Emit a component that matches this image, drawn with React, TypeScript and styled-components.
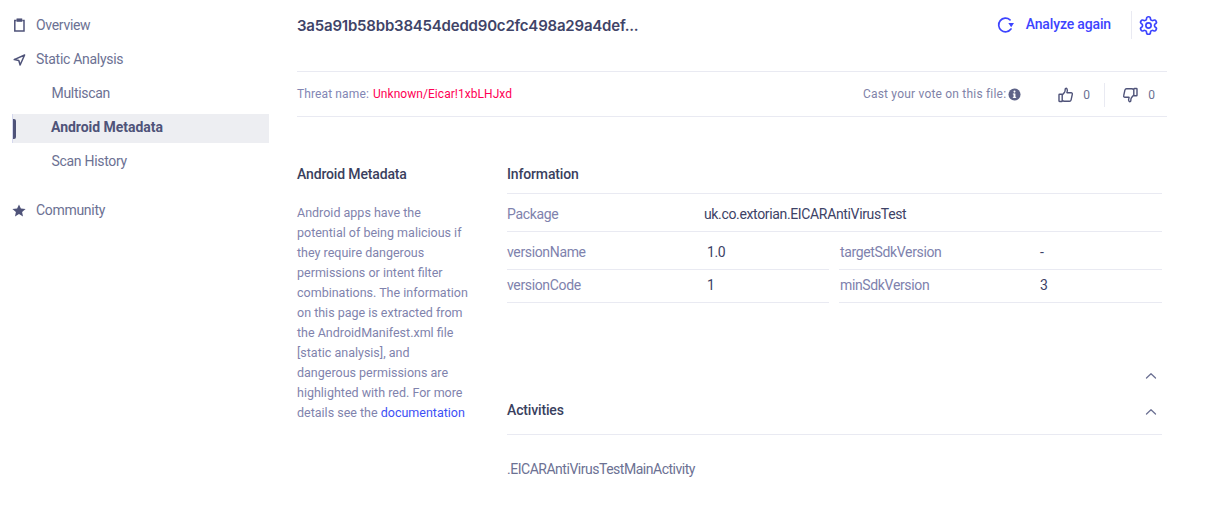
import React from "react";
import styled, { createGlobalStyle } from "styled-components";

const Global = createGlobalStyle`
  html, body { margin: 0; padding: 0; background: #fff; }
  body { font-family: Roboto, "Liberation Sans", sans-serif; color: #3d4266; }
  * { box-sizing: border-box; }
`;

const Page = styled.div`
  width: 1215px;
  height: 509px;
  display: flex;
  overflow: hidden;
  background: #fff;
`;

const Sidebar = styled.nav`
  width: 257px;
  margin-left: 12px;
  padding-top: 8px;
  flex: none;
  display: flex;
  flex-direction: column;
`;

const NavRow = styled.div<{ $top?: number }>`
  height: 34px;
  display: flex;
  align-items: center;
  font-size: 14px;
  letter-spacing: -0.3px;
  color: #6c7193;
  margin-top: ${(p) => p.$top ?? 0}px;
  svg { width: 14px; height: 14px; margin-right: 10px; flex: none; color: #4f5379; }
`;

const SubRow = styled.div<{ $active?: boolean }>`
  height: ${(p) => (p.$active ? 29 : 34)}px;
  margin: ${(p) => (p.$active ? "4px 0 1px" : "0")};
  padding-left: ${(p) => (p.$active ? 38 : 39.5)}px;
  padding-bottom: ${(p) => (p.$active ? 4 : 0)}px;
  display: flex;
  align-items: center;
  font-size: 14px;
  letter-spacing: ${(p) => (p.$active ? "-0.03px" : "-0.3px")};
  position: relative;
  color: ${(p) => (p.$active ? "#4f5379" : "#6c7193")};
  font-weight: ${(p) => (p.$active ? 700 : 400)};
  background: ${(p) => (p.$active ? "#edeef2" : "transparent")};
  border-left: ${(p) => (p.$active ? "1px solid #d5d8ee" : "0 solid transparent")};
`;

const ActiveBar = styled.span`
  position: absolute;
  left: 0;
  top: 5px;
  width: 3px;
  height: 20px;
  border-radius: 0 2px 2px 0;
  background: #4f5379;
`;

const Main = styled.main`
  margin-left: 28px;
  width: 870px;
  flex: none;
  display: flex;
  flex-direction: column;
`;

const Header = styled.header`
  height: 72px;
  border-bottom: 1px solid #e9eaf2;
  display: flex;
  align-items: flex-start;
  justify-content: space-between;
  padding-top: 11px;
`;

const Title = styled.h1`
  margin: 4px 0 0;
  font-family: Inter, Roboto, sans-serif;
  font-size: 15px;
  line-height: 22px;
  font-weight: 600;
  letter-spacing: -0.2px;
  color: #3f4468;
`;

const Actions = styled.div`
  display: flex;
  align-items: center;
  height: 28px;
  margin-right: 8px;
`;

const AnalyzeButton = styled.div`
  display: flex;
  align-items: center;
  gap: 11px;
  font-size: 14px;
  font-weight: 500;
  letter-spacing: -0.15px;
  line-height: 26px;
  padding-bottom: 2px;
  color: #3d44ff;
  padding-right: 20px;
  height: 28px;
  border-right: 1px solid #e9eaf2;
  svg { width: 18px; height: 18px; margin-top: 2px; }
`;

const Gear = styled.div`
  width: 21px;
  height: 21px;
  margin-left: 6px;
  color: #3d44ff;
  svg { width: 21px; height: 21px; display: block; }
`;

const ThreatRow = styled.div`
  height: 45px;
  border-bottom: 1px solid #e9eaf2;
  display: flex;
  align-items: center;
  justify-content: space-between;
  font-size: 12px;
  letter-spacing: 0.12px;
`;

const Threat = styled.div`
  color: #8286b4;
  span { color: #ff0055; letter-spacing: 0.05px; margin-left: 1px; }
`;

const Vote = styled.div`
  display: flex;
  align-items: center;
  color: #7f83a8;
`;

const VoteLabel = styled.div`
  display: flex;
  align-items: center;
  gap: 2px;
  margin-right: 37px;
  letter-spacing: 0.2px;
  svg { width: 13px; height: 13px; color: #5d6287; }
`;

const VoteButton = styled.div<{ $divider?: boolean }>`
  display: flex;
  align-items: center;
  gap: ${(p) => (p.$divider ? 9 : 10)}px;
  height: 24px;
  margin-top: 1px;
  color: #6c7193;
  line-height: 30px;
  ${(p) => (p.$divider ? "border-right: 1px solid #e9eaf2; padding-right: 14px; margin-right: 17px;" : "padding-right: 12px;")}
  svg { width: 16px; height: 16px; margin-top: 1px; color: #4f5379; }
`;

const Body = styled.div`
  display: flex;
  padding-top: 47px;
`;

const Aside = styled.aside`
  width: 170px;
  flex: none;
  margin-right: 40px;
`;

const SectionHead = styled.h2`
  margin: 0;
  height: 20px;
  line-height: 20px;
  font-size: 14px;
  font-weight: 500;
  letter-spacing: -0.15px;
  color: #3a3f5e;
`;

const Description = styled.p`
  margin: 19px 0 0;
  font-size: 12.5px;
  line-height: 20px;
  color: #7f83ad;
  white-space: nowrap;
  a { color: #3d50f5; text-decoration: none; }
`;

const Content = styled.section`
  width: 655px;
  flex: none;
  display: flex;
  flex-direction: column;
`;

const InfoHead = styled.div`
  height: 30px;
  border-bottom: 1px solid #e9eaf2;
`;

const FullRow = styled.div`
  height: 38px;
  padding-top: 2px;
  display: flex;
  align-items: center;
  border-bottom: 1px solid #e9eaf2;
`;

const Key = styled.div<{ $w: number }>`
  width: ${(p) => p.$w}px;
  flex: none;
  font-size: 14px;
  letter-spacing: -0.35px;
  color: #7e82ad;
`;

const Val = styled.div`
  font-size: 14px;
  letter-spacing: -0.35px;
  color: #3d4266;
`;

const Grid = styled.div`
  display: grid;
  grid-template-columns: 322px 323px;
  column-gap: 10px;
`;

const Cell = styled.div<{ $h: number; $right?: boolean; $pt?: number; $pb?: number }>`
  height: ${(p) => p.$h}px;
  display: flex;
  align-items: center;
  padding: ${(p) => p.$pt ?? 0}px 0 ${(p) => p.$pb ?? 0}px ${(p) => (p.$right ? 1 : 0)}px;
  border-bottom: 1px solid #e9eaf2;
`;

const ChevronRow = styled.div<{ $top?: number }>`
  display: flex;
  justify-content: flex-end;
  padding-right: 5px;
  margin-top: ${(p) => p.$top ?? 0}px;
  color: #6c7193;
  svg { width: 12px; height: 12px; display: block; }
`;

const ActivitiesHead = styled.div`
  margin-top: 18px;
  height: 35px;
  border-bottom: 1px solid #e9eaf2;
  display: flex;
  align-items: flex-start;
  justify-content: space-between;
  padding-right: 5px;
  color: #6c7193;
  svg { width: 12px; height: 12px; margin-top: 6px; }
`;

const Activity = styled.div`
  margin-top: 24px;
  line-height: 20px;
  font-size: 14px;
  letter-spacing: -0.48px;
  color: #6c7193;
`;

const Chevron = () => (
  <svg viewBox="0 0 12 12" fill="none" stroke="currentColor" strokeWidth="1.3" strokeLinecap="round" strokeLinejoin="round">
    <path d="M1.5 8 6 3.8 10.5 8" />
  </svg>
);

const Clipboard = () => (
  <svg viewBox="0 0 14 14" fill="none" stroke="currentColor" strokeWidth="1.5">
    <path d="M4.5 2.6H2.8v10.4h9.2V2.6h-1.7" />
    <rect x="4.8" y="0.8" width="5.2" height="2.8" fill="currentColor" strokeWidth="0.5" />
  </svg>
);

const Send = () => (
  <svg viewBox="0 0 14 14" fill="none" stroke="currentColor" strokeWidth="1.5" strokeLinejoin="round">
    <path d="M12.6 3 2.2 7.6l4.6.9 1.3 4.5z" />
  </svg>
);

const Star = () => (
  <svg viewBox="0 0 14 14" fill="currentColor">
    <path d="M7 1.4l1.9 4.1 4.7.5-3.5 3.1.9 4.5L7 10.9l-4 2.7.9-4.5L.4 6l4.7-.5z" />
  </svg>
);

const Refresh = () => (
  <svg viewBox="0 0 18 18" fill="none" stroke="currentColor" strokeWidth="1.7" strokeLinecap="round">
    <path d="M13 3.9A6.8 6.8 0 1 0 14 13" />
    <path d="M11.3 7h5.7l-2.8 4.2z" fill="currentColor" stroke="none" />
  </svg>
);

const GearIcon = () => (
  <svg viewBox="0 0 24 24" fill="none" stroke="currentColor" strokeWidth="1.9" strokeLinecap="round" strokeLinejoin="round">
    <path d="M12.22 2h-.44a2 2 0 0 0-2 2v.18a2 2 0 0 1-1 1.73l-.43.25a2 2 0 0 1-2 0l-.15-.08a2 2 0 0 0-2.73.73l-.22.38a2 2 0 0 0 .73 2.73l.15.1a2 2 0 0 1 1 1.72v.51a2 2 0 0 1-1 1.74l-.15.09a2 2 0 0 0-.73 2.73l.22.38a2 2 0 0 0 2.73.73l.15-.08a2 2 0 0 1 2 0l.43.25a2 2 0 0 1 1 1.73V20a2 2 0 0 0 2 2h.44a2 2 0 0 0 2-2v-.18a2 2 0 0 1 1-1.73l.43-.25a2 2 0 0 1 2 0l.15.08a2 2 0 0 0 2.73-.73l.22-.39a2 2 0 0 0-.73-2.73l-.15-.08a2 2 0 0 1-1-1.74v-.5a2 2 0 0 1 1-1.74l.15-.09a2 2 0 0 0 .73-2.73l-.22-.38a2 2 0 0 0-2.73-.73l-.15.08a2 2 0 0 1-2 0l-.43-.25a2 2 0 0 1-1-1.73V4a2 2 0 0 0-2-2z" />
    <circle cx="12" cy="12" r="3" />
  </svg>
);

const Info = () => (
  <svg viewBox="0 0 14 14">
    <circle cx="7" cy="7" r="6.5" fill="currentColor" />
    <rect x="6" y="6" width="2" height="4.6" fill="#fff" />
    <rect x="5.2" y="9.6" width="3.6" height="1" fill="#fff" />
    <rect x="5.2" y="6" width="2" height="1" fill="#fff" />
    <circle cx="7" cy="3.9" r="1.1" fill="#fff" />
  </svg>
);

const ThumbUp = () => (
  <svg viewBox="0 0 16 16" fill="none" stroke="currentColor" strokeWidth="1.4" strokeLinejoin="round">
    <rect x="1" y="7.2" width="3.2" height="7.3" rx="0.6" />
    <path d="M4.2 8 6.6 5.2c.5-.7.6-1.6.6-3 0-.9 1.1-1.2 1.7-.5.7.9.6 2.3 0 4h4.2c.8 0 1.4.8 1.2 1.6l-1.2 5.5c-.2.8-.8 1.4-1.6 1.4H6.3c-.8 0-1.5-.3-2.1-.8" />
  </svg>
);

const ThumbDown = () => (
  <svg viewBox="0 0 16 16" fill="none" stroke="currentColor" strokeWidth="1.4" strokeLinejoin="round">
    <rect x="11.8" y="1.5" width="3.2" height="7.3" rx="0.6" />
    <path d="M11.8 8 9.4 10.8c-.5.7-.6 1.6-.6 3 0 .9-1.1 1.2-1.7.5-.7-.9-.6-2.3 0-4H2.9c-.8 0-1.4-.8-1.2-1.6l1.2-5.5c.2-.8.8-1.4 1.6-1.4h5.2c.8 0 1.5.3 2.1.8" />
  </svg>
);

export default function App() {
  return (
    <Page>
      <Global />
      <Sidebar>
        <NavRow><Clipboard />Overview</NavRow>
        <NavRow><Send />Static Analysis</NavRow>
        <SubRow>Multiscan</SubRow>
        <SubRow $active><ActiveBar />Android Metadata</SubRow>
        <SubRow>Scan History</SubRow>
        <NavRow $top={15}><Star />Community</NavRow>
      </Sidebar>
      <Main>
        <Header>
          <Title>3a5a91b58bb38454dedd90c2fc498a29a4def...</Title>
          <Actions>
            <AnalyzeButton><Refresh />Analyze again</AnalyzeButton>
            <Gear><GearIcon /></Gear>
          </Actions>
        </Header>
        <ThreatRow>
          <Threat>Threat name: <span>Unknown/Eicar!1xbLHJxd</span></Threat>
          <Vote>
            <VoteLabel>Cast your vote on this file: <Info /></VoteLabel>
            <VoteButton $divider><ThumbUp />0</VoteButton>
            <VoteButton><ThumbDown />0</VoteButton>
          </Vote>
        </ThreatRow>
        <Body>
          <Aside>
            <SectionHead>Android Metadata</SectionHead>
            <Description>
              Android apps have the<br />
              potential of being malicious if<br />
              they require dangerous<br />
              permissions or intent filter<br />
              combinations. The information<br />
              on this page is extracted from<br />
              the AndroidManifest.xml file<br />
              [static analysis], and<br />
              dangerous permissions are<br />
              highlighted with red. For more<br />
              details see the <a href="#">documentation</a>
            </Description>
          </Aside>
          <Content>
            <InfoHead><SectionHead>Information</SectionHead></InfoHead>
            <FullRow><Key $w={197}>Package</Key><Val>uk.co.extorian.EICARAntiVirusTest</Val></FullRow>
            <Grid>
              <Cell $h={38} $pt={2}><Key $w={200}>versionName</Key><Val>1.0</Val></Cell>
              <Cell $h={38} $pt={2} $right><Key $w={200}>targetSdkVersion</Key><Val>-</Val></Cell>
              <Cell $h={33} $pb={2}><Key $w={200}>versionCode</Key><Val>1</Val></Cell>
              <Cell $h={33} $pb={2} $right><Key $w={200}>minSdkVersion</Key><Val>3</Val></Cell>
            </Grid>
            <ChevronRow $top={67}><Chevron /></ChevronRow>
            <ActivitiesHead><SectionHead>Activities</SectionHead><Chevron /></ActivitiesHead>
            <Activity>.EICARAntiVirusTestMainActivity</Activity>
          </Content>
        </Body>
      </Main>
    </Page>
  );
}
